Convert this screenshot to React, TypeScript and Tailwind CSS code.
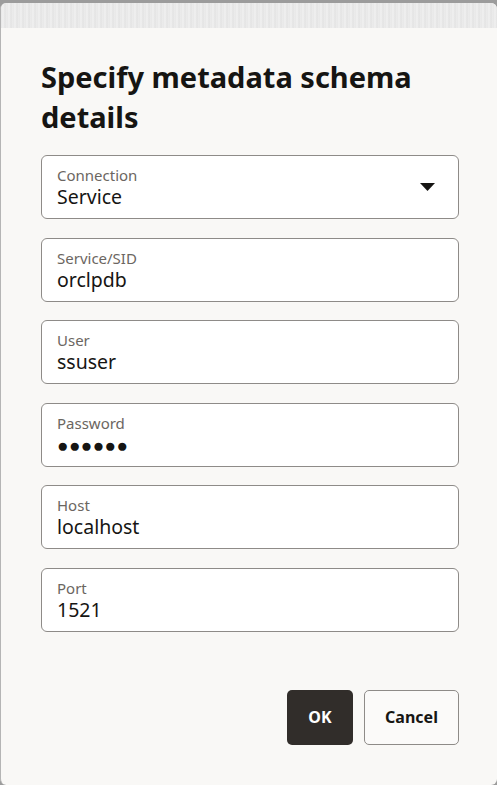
import { useState } from "react";

type Field = {
  label: string;
  value: string;
  secret?: boolean;
  select?: boolean;
};

const fields: Field[] = [
  { label: "Connection", value: "Service", select: true },
  { label: "Service/SID", value: "orclpdb" },
  { label: "User", value: "ssuser" },
  { label: "Password", value: "●●●●●●", secret: true },
  { label: "Host", value: "localhost" },
  { label: "Port", value: "1521" },
];

function FieldBox({ field }: { field: Field }) {
  return (
    <div className="flex h-[64px] items-center justify-between rounded-[6px] border border-[#8e8b88] bg-white pl-[15px] pr-[23px]">
      <div className="flex flex-col">
        <span className="text-[15px] leading-[20px] text-[#6b6661]">{field.label}</span>
        <span
          className={
            field.secret
              ? "text-[19px] leading-[24px] tracking-[0.4px] text-[#161513]"
              : "text-[19.5px] leading-[24px] text-[#161513]"
          }
        >
          {field.value}
        </span>
      </div>
      {field.select && (
        <svg width="15" height="8" viewBox="0 0 15 8" aria-hidden>
          <path d="M0 0h15L7.5 8z" fill="#161513" />
        </svg>
      )}
    </div>
  );
}

export default function App() {
  const [open] = useState(true);

  return (
    <div className="h-[785px] w-[497px] bg-[#9c9c9c] pt-[3px] font-['Noto_Sans',sans-serif]">
      {open && (
        <div className="flex h-[782px] flex-col overflow-hidden rounded-[6px] border-l border-[#b5b5b5] bg-[#f9f8f6]">
          <div className="h-[25px] bg-[repeating-linear-gradient(90deg,#e6e6e6_0px,#f1f1f1_2px,#e3e3e3_4px,#ededed_6px)]" />
          <div className="flex flex-1 flex-col pl-[40px] pr-[38px]">
            <h2 className="mt-[29px] text-[29px] font-bold leading-[40px] text-[#161513]">
              Specify metadata schema details
            </h2>
            <div className="mt-[18px] flex flex-col gap-[18.6px]">
              {fields.map((f) => (
                <FieldBox key={f.label} field={f} />
              ))}
            </div>
            <div className="mt-[58px] flex justify-end gap-[11px]">
              <button className="h-[55px] w-[66px] rounded-[5px] bg-[#312d2a] text-[16px] font-bold text-white">
                OK
              </button>
              <button className="h-[55px] w-[95px] rounded-[5px] border border-[#8e8b88] bg-[#fbfaf9] text-[16px] font-bold text-[#161513]">
                Cancel
              </button>
            </div>
          </div>
        </div>
      )}
    </div>
  );
}
